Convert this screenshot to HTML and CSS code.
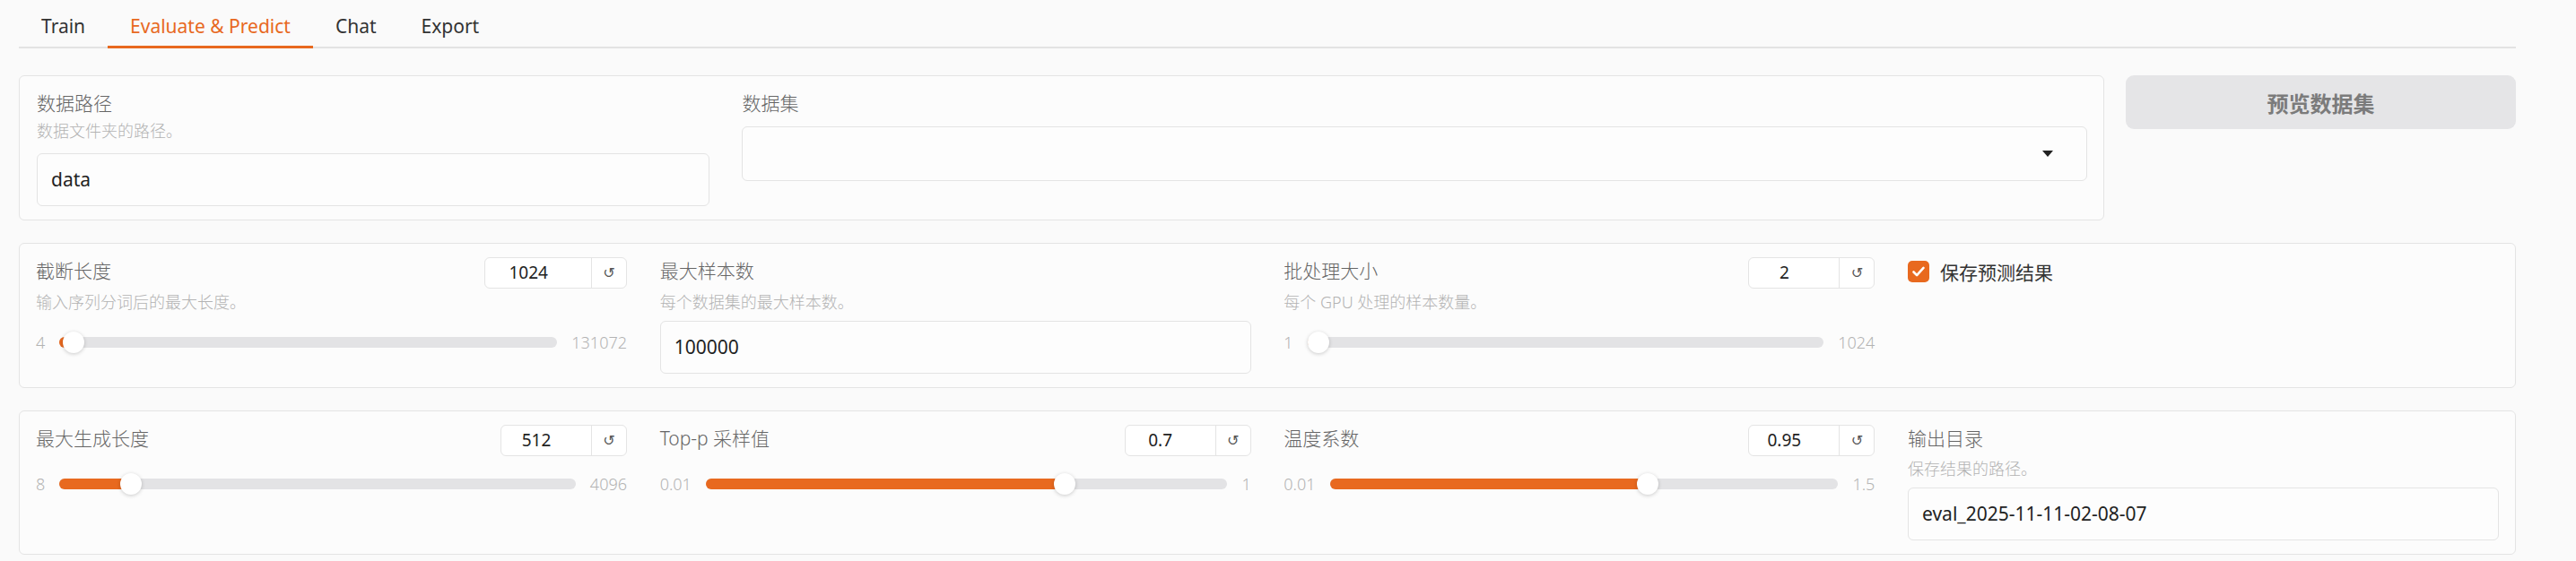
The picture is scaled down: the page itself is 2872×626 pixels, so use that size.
FILE: index.html
```html
<!DOCTYPE html>
<html lang="zh-CN">
<head>
<meta charset="utf-8">
<title>Evaluate &amp; Predict</title>
<link rel="stylesheet" href="styles.css">
</head>
<body>
<div class="page">
  <nav class="tabs">
    <div class="tab">Train</div>
    <div class="tab active">Evaluate &amp; Predict</div>
    <div class="tab">Chat</div>
    <div class="tab">Export</div>
  </nav>

  <div class="top-row">
    <div class="block form-data">
      <div class="field">
        <div class="label">数据路径</div>
        <div class="info first">数据文件夹的路径。</div>
        <div class="textbox first">data</div>
      </div>
      <div class="field">
        <div class="label">数据集</div>
        <div class="dropdown"><span class="caret"></span></div>
      </div>
    </div>
    <button class="btn-preview">预览数据集</button>
  </div>

  <div class="block params">
    <div class="field">
      <div class="head">
        <span class="label">截断长度</span>
        <div class="numbox wide"><span class="num">1024</span><span class="reset">↺</span></div>
      </div>
      <div class="info">输入序列分词后的最大长度。</div>
      <div class="slider">
        <span class="lim">4</span>
        <div class="track" style="--p:0.0078"><div class="fill"></div><div class="thumb"></div></div>
        <span class="lim">131072</span>
      </div>
    </div>
    <div class="field">
      <div class="head"><span class="label">最大样本数</span></div>
      <div class="info">每个数据集的最大样本数。</div>
      <div class="textbox">100000</div>
    </div>
    <div class="field">
      <div class="head">
        <span class="label">批处理大小</span>
        <div class="numbox"><span class="num">2</span><span class="reset">↺</span></div>
      </div>
      <div class="info">每个 GPU 处理的样本数量。</div>
      <div class="slider">
        <span class="lim">1</span>
        <div class="track" style="--p:0.001"><div class="fill"></div><div class="thumb"></div></div>
        <span class="lim">1024</span>
      </div>
    </div>
    <div class="field">
      <label class="check">
        <span class="box"><svg viewBox="0 0 24 24" width="24" height="24"><path d="M6.5 12.5l3.6 3.6 7.4-8.2" fill="none" stroke="#fff" stroke-width="2.6" stroke-linecap="round" stroke-linejoin="round"/></svg></span>
        <span class="check-text">保存预测结果</span>
      </label>
    </div>
  </div>

  <div class="block params">
    <div class="field">
      <div class="head">
        <span class="label">最大生成长度</span>
        <div class="numbox"><span class="num">512</span><span class="reset">↺</span></div>
      </div>
      <div class="slider">
        <span class="lim">8</span>
        <div class="track" style="--p:0.1233"><div class="fill"></div><div class="thumb"></div></div>
        <span class="lim">4096</span>
      </div>
    </div>
    <div class="field">
      <div class="head">
        <span class="label">Top-p 采样值</span>
        <div class="numbox"><span class="num">0.7</span><span class="reset">↺</span></div>
      </div>
      <div class="slider">
        <span class="lim">0.01</span>
        <div class="track" style="--p:0.697"><div class="fill"></div><div class="thumb"></div></div>
        <span class="lim">1</span>
      </div>
    </div>
    <div class="field">
      <div class="head">
        <span class="label">温度系数</span>
        <div class="numbox"><span class="num">0.95</span><span class="reset">↺</span></div>
      </div>
      <div class="slider">
        <span class="lim">0.01</span>
        <div class="track" style="--p:0.6309"><div class="fill"></div><div class="thumb"></div></div>
        <span class="lim">1.5</span>
      </div>
    </div>
    <div class="field">
      <div class="head"><span class="label">输出目录</span></div>
      <div class="info">保存结果的路径。</div>
      <div class="textbox">eval_2025-11-11-02-08-07</div>
    </div>
  </div>
</div>
</body>
</html>
```

FILE: styles.css
```css
html, body {
  margin: 0;
  padding: 0;
  background: #fafafa;
  overflow: hidden;
}

body {
  width: 2872px;
  height: 626px;
  font-family: "Noto Sans", "Noto Sans CJK SC", sans-serif;
  color: #333;
}

.page {
  width: 2784px;
  padding-left: 21px;
}

/* Tabs */
.tabs {
  display: flex;
  height: 52px;
  border-bottom: 2px solid #e3e3e3;
}

.tab {
  height: 54px;
  box-sizing: border-box;
  padding: 8px 25px 0;
  margin-bottom: -2px;
  border-bottom: 3px solid transparent;
  font-size: 21px;
  line-height: 43px;
  color: #333;
  white-space: nowrap;
}

.tab.active {
  color: #e8691f;
  border-bottom-color: #e8691f;
}

/* Blocks */
.block {
  box-sizing: border-box;
  background: #fcfcfc;
  border: 1px solid #e4e4e4;
  border-radius: 6px;
}

.top-row {
  display: flex;
  align-items: flex-start;
  gap: 24px;
  margin-top: 30px;
}

.form-data {
  flex: 1;
  display: grid;
  grid-template-columns: 1fr 2fr;
  column-gap: 36.6px;
  padding: 15px 18px 15px 19px;
}

.btn-preview {
  width: 435px;
  height: 60px;
  flex: none;
  border: none;
  border-radius: 9px;
  background: #e5e5e7;
  color: #7b7b7b;
  font-family: "Noto Sans", "Noto Sans CJK SC", sans-serif;
  font-size: 24px;
  font-weight: 600;
  padding: 0;
}

.params {
  margin-top: 25px;
  display: grid;
  grid-template-columns: repeat(4, 1fr);
  column-gap: 36.7px;
  padding: 15px 18px;
}

/* Fields */
.field {
  display: flex;
  flex-direction: column;
  min-width: 0;
}

.label {
  font-size: 21px;
  font-weight: 300;
  line-height: 31px;
  color: #666;
  white-space: nowrap;
}

.info {
  font-size: 18px;
  font-weight: 300;
  line-height: 24px;
  color: #b3b3b3;
  margin-top: 2.5px;
  white-space: nowrap;
}

.info.first {
  margin-top: 3px;
}

.head {
  display: flex;
  justify-content: space-between;
  align-items: flex-start;
  min-height: 35px;
}

.textbox {
  margin-top: 9px;
  height: 59px;
  box-sizing: border-box;
  border: 1px solid #e4e4e4;
  border-radius: 6px;
  background: #fdfdfd;
  padding: 0 15px;
  font-size: 21px;
  line-height: 57px;
  color: #222;
  white-space: nowrap;
}

.textbox.first {
  margin-top: 13px;
}

.dropdown {
  margin-top: 10px;
  height: 61px;
  box-sizing: border-box;
  border: 1px solid #e4e4e4;
  border-radius: 6px;
  background: #fdfdfd;
  display: flex;
  align-items: center;
  justify-content: flex-end;
  padding-right: 37px;
}

.caret {
  width: 0;
  height: 0;
  border-left: 6.5px solid transparent;
  border-right: 6.5px solid transparent;
  border-top: 7px solid #222;
}

/* Number box */
.numbox {
  display: flex;
  height: 35px;
  box-sizing: border-box;
  border: 1px solid #e4e4e4;
  border-radius: 6px;
  background: #fff;
}

.num {
  width: 101px;
  box-sizing: border-box;
  padding-right: 22px;
  border-right: 1px solid #e4e4e4;
  text-align: center;
  font-size: 19px;
  line-height: 33px;
  color: #222;
}

.numbox.wide .num {
  width: 118.5px;
}

.reset {
  width: 38px;
  text-align: center;
  font-family: "DejaVu Sans", sans-serif;
  font-size: 16px;
  line-height: 33px;
  color: #555;
}

/* Slider */
.slider {
  display: flex;
  align-items: center;
  gap: 16px;
  height: 24px;
  margin-top: 21.5px;
}

.head + .slider {
  margin-top: 19px;
}

.lim {
  font-size: 18px;
  font-weight: 300;
  line-height: 24px;
  color: #b3b3b3;
}

.track {
  position: relative;
  flex: 1;
  height: 12px;
  border-radius: 6px;
  background: #e3e3e5;
}

.fill {
  position: absolute;
  left: 0;
  top: 0;
  bottom: 0;
  width: calc(12px + var(--p) * (100% - 24px));
  border-radius: 6px;
  background: #e8691f;
}

.thumb {
  position: absolute;
  top: 50%;
  left: calc(var(--p) * (100% - 24px));
  width: 24px;
  height: 24px;
  margin-top: -12px;
  border-radius: 50%;
  background: #fff;
  box-shadow: 0 1px 4px rgba(0, 0, 0, 0.2);
}

/* Checkbox */
.check {
  display: flex;
  align-items: center;
  gap: 12px;
  height: 31px;
}

.box {
  width: 24px;
  height: 24px;
  border-radius: 5px;
  background: #e8691f;
  display: flex;
}

.check-text {
  font-size: 21px;
  color: #333;
  white-space: nowrap;
}
```
